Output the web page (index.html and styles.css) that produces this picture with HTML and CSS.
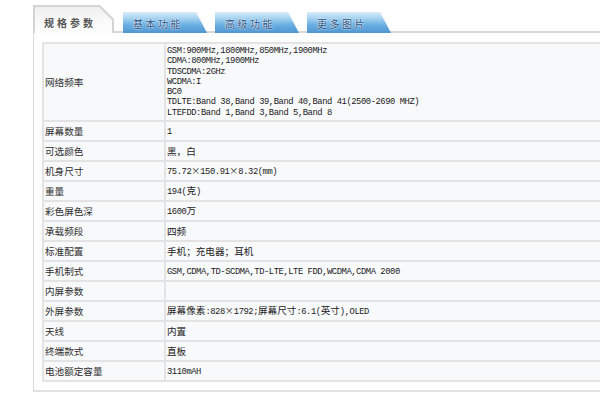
FILE: index.html
```html
<!DOCTYPE html>
<html lang="zh">
<head>
<meta charset="utf-8">
<title>规格参数</title>
<link rel="stylesheet" href="styles.css">
</head>
<body>
<div class="page">
  <div class="tabs">
    <div class="tab tab-active"><div class="tab-in">规格参数</div></div>
    <div class="tab tab-blue">基本功能</div>
    <div class="tab tab-blue">高级功能</div>
    <div class="tab tab-blue">更多图片</div>
  </div>
  <div class="panel">
    <table class="spec">
      <tr class="tall">
        <th>网络频率</th>
        <td class="lines">
          <div class="en">GSM:900MHz,1800MHz,850MHz,1900MHz</div>
          <div class="en">CDMA:800MHz,1900MHz</div>
          <div class="en">TDSCDMA:2GHz</div>
          <div class="en">WCDMA:I</div>
          <div class="en">BC0</div>
          <div class="en">TDLTE:Band 38,Band 39,Band 40,Band 41(2500-2690 MHZ)</div>
          <div class="en">LTEFDD:Band 1,Band 3,Band 5,Band 8</div>
        </td>
      </tr>
      <tr><th>屏幕数量</th><td><span class="en">1</span></td></tr>
      <tr><th>可选颜色</th><td>黑，白</td></tr>
      <tr><th>机身尺寸</th><td><span class="en">75.72</span><span class="x">×</span><span class="en">150.91</span><span class="x">×</span><span class="en">8.32(mm)</span></td></tr>
      <tr><th>重量</th><td><span class="en">194(</span>克<span class="en">)</span></td></tr>
      <tr><th>彩色屏色深</th><td><span class="en">1600</span>万</td></tr>
      <tr><th>承载频段</th><td>四频</td></tr>
      <tr><th>标准配置</th><td>手机；充电器；耳机</td></tr>
      <tr><th>手机制式</th><td><span class="en">GSM,CDMA,TD-SCDMA,TD-LTE,LTE FDD,WCDMA,CDMA 2000</span></td></tr>
      <tr><th>内屏参数</th><td></td></tr>
      <tr><th>外屏参数</th><td>屏幕像素<span class="en">:828</span><span class="x">×</span><span class="en">1792;</span>屏幕尺寸<span class="en">:6.1(</span>英寸<span class="en">),OLED</span></td></tr>
      <tr><th>天线</th><td>内置</td></tr>
      <tr><th>终端款式</th><td>直板</td></tr>
      <tr><th>电池额定容量</th><td><span class="en">3110mAH</span></td></tr>
    </table>
  </div>
</div>
</body>
</html>
```

FILE: styles.css
```css
html, body {
  margin: 0;
  padding: 0;
  background: #fff;
  overflow: hidden;
}

.page {
  width: 720px;
  padding: 5px 0 0 33px;
  font-family: "Noto Sans CJK SC", sans-serif;
}

.tabs {
  display: flex;
  align-items: flex-end;
  gap: 8px;
  height: 28px;
  margin-bottom: -2px;
}

.tab {
  flex: none;
  z-index: 1;
}

.tab-active {
  width: 81px;
  height: 28px;
  margin-right: 1px;
  background: #d4d4d4;
  clip-path: polygon(0 0, 67px 0, 81px 14px, 81px 100%, 0 100%);
}

.tab-in {
  box-sizing: border-box;
  width: 77px;
  height: 26px;
  margin: 2px 2px 0 2px;
  padding: 4px 0 0 9px;
  background: linear-gradient(#efefef, #fafafa 60%, #fdfdfd);
  clip-path: polygon(0 0, 64px 0, 77px 13px, 77px 100%, 0 100%);
  display: flex;
  align-items: center;
  font-size: 10px;
  font-weight: bold;
  letter-spacing: 3px;
  color: #555;
}

.tab-blue {
  box-sizing: border-box;
  width: 84px;
  height: 21px;
  padding: 2px 0 0 10px;
  display: flex;
  align-items: center;
  background: linear-gradient(#d8edfa 0%, #a6d2f0 30%, #6aaee2 62%, #4f97d2 100%);
  clip-path: polygon(0 0, 73px 0, 84px 100%, 0 100%);
  font-size: 10px;
  letter-spacing: 2.5px;
  color: #1c4c7e;
  text-shadow: 0 0 2px #fff, 0 0 1px #fff;
}

.panel {
  border-top: 2px solid #d8d8d8;
  border-left: 1px solid #d8d8d8;
  border-bottom: 2px solid #e2e2e2;
  padding: 9px 0 8px 8px;
}

.spec {
  width: 640px;
  border-collapse: separate;
  border-spacing: 0;
  border-top: 2px solid #e3e3e3;
  border-left: 2px solid #e3e3e3;
  background: #f8f9fb;
}

.spec th,
.spec td {
  height: 18px;
  padding: 0 1px;
  border-bottom: 2px solid #e3e3e3;
  text-align: left;
  vertical-align: middle;
  font-weight: normal;
  font-size: 9.6px;
  line-height: 12px;
  color: #222;
  white-space: nowrap;
}

.spec th {
  width: 118px;
  border-right: 2px solid #e3e3e3;
  color: #2e2e2e;
}

.spec .tall td,
.spec .tall th {
  height: 76px;
}

.lines {
  padding-top: 1px;
}

.lines .en {
  display: block;
  line-height: 10.2px;
}

.en {
  font-family: "Liberation Mono", monospace;
  font-size: 8.8px;
  letter-spacing: -0.43px;
  color: #1a1a1a;
}

.x {
  display: inline-block;
  width: 9px;
  text-align: center;
  font-size: 9px;
}
```
